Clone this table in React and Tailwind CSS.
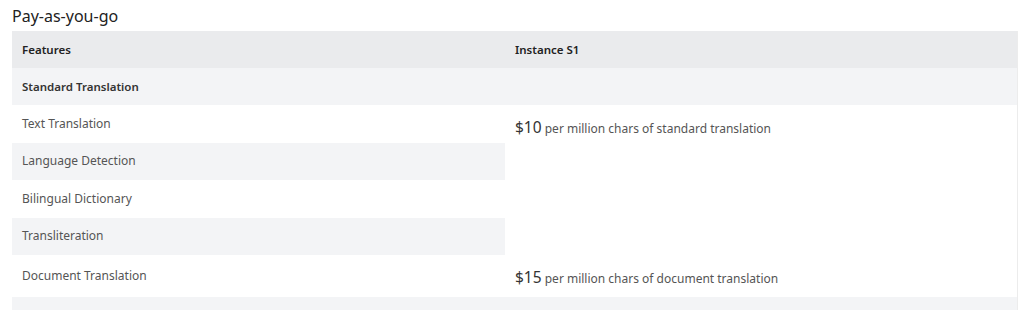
const rows = [
  { name: "Text Translation", shade: false },
  { name: "Language Detection", shade: true },
  { name: "Bilingual Dictionary", shade: false },
  { name: "Transliteration", shade: true },
];

function Price({ amount, text }) {
  return (
    <span className="text-[#555]">
      <span className="text-[15.5px] text-[#333]">{amount}</span>{" "}
      <span className="text-[12px]">{text}</span>
    </span>
  );
}

export default function App() {
  return (
    <div
      className="bg-white h-[310px] overflow-hidden pl-[12px] pr-[6px]"
      style={{ fontFamily: '"Noto Sans", "Open Sans", sans-serif' }}
    >
      <h2 className="text-[16px] leading-[30px] text-[#222] pt-[1px]">
        Pay-as-you-go
      </h2>
      <div className="border-r border-[#ececec]">
        <table className="w-full border-collapse text-[12px] table-fixed">
          <colgroup>
            <col className="w-[493px]" />
            <col />
          </colgroup>
          <thead>
            <tr className="bg-[#eaebed] h-[37px]">
              <th className="text-left font-semibold text-[11.5px] text-[#222] px-[10px]">
                Features
              </th>
              <th className="text-left font-semibold text-[11.5px] text-[#222] px-[10px]">
                Instance S1
              </th>
            </tr>
          </thead>
          <tbody>
            <tr className="bg-[#f3f4f6] h-[37px]">
              <td className="px-[10px] font-semibold text-[11.5px] text-[#333]">
                Standard Translation
              </td>
              <td></td>
            </tr>
            {rows.map((r, i) => (
              <tr key={r.name} className="h-[37.5px]">
                <td
                  className={
                    "px-[10px] text-[#555] " + (r.shade ? "bg-[#f3f4f6]" : "bg-white")
                  }
                >
                  {r.name}
                </td>
                {i === 0 && (
                  <td rowSpan={4} className="align-top bg-white px-[10px] pt-[11px]">
                    <Price amount="$10" text="per million chars of standard translation" />
                  </td>
                )}
              </tr>
            ))}
            <tr className="h-[42px]">
              <td className="px-[10px] text-[#555]">Document Translation</td>
              <td className="px-[10px] pt-[4px]">
                <Price amount="$15" text="per million chars of document translation" />
              </td>
            </tr>
            <tr className="bg-[#f3f4f6] h-[37px]">
              <td></td>
              <td></td>
            </tr>
          </tbody>
        </table>
      </div>
    </div>
  );
}
